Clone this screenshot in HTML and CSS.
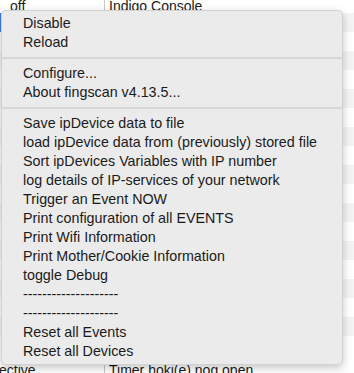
FILE: index.html
```html
<!DOCTYPE html>
<html lang="en">
<head>
    <meta charset="utf-8">
    <title>Plugin menu</title>
    <link rel="stylesheet" href="styles.css">
</head>
<body>
<div class="table">
    <div class="row top"><div class="cell first">off</div><div class="cell">Indigo Console</div></div>
    <div class="row selected alt"><div class="cell first"></div><div class="cell"></div></div>
    <div class="row"><div class="cell first"></div><div class="cell"></div></div>
    <div class="row alt"><div class="cell first"></div><div class="cell"></div></div>
    <div class="row"><div class="cell first"></div><div class="cell"></div></div>
    <div class="row alt"><div class="cell first"></div><div class="cell"></div></div>
    <div class="row"><div class="cell first"></div><div class="cell"></div></div>
    <div class="row alt"><div class="cell first"></div><div class="cell"></div></div>
    <div class="row"><div class="cell first"></div><div class="cell"></div></div>
    <div class="row alt"><div class="cell first"></div><div class="cell"></div></div>
    <div class="row"><div class="cell first"></div><div class="cell"></div></div>
    <div class="row alt"><div class="cell first"></div><div class="cell"></div></div>
    <div class="row"><div class="cell first"></div><div class="cell"></div></div>
    <div class="row alt"><div class="cell first"></div><div class="cell"></div></div>
    <div class="row"><div class="cell first"></div><div class="cell"></div></div>
    <div class="row alt"><div class="cell first"></div><div class="cell"></div></div>
    <div class="row"><div class="cell first"></div><div class="cell"></div></div>
    <div class="row alt"><div class="cell first"></div><div class="cell"></div></div>
    <div class="row"><div class="cell first"></div><div class="cell"></div></div>
    <div class="row last"><div class="cell first">ective</div><div class="cell">Timer hoki(e) nog open</div></div>
</div>

<div class="menu">
    <div class="item">Disable</div>
    <div class="item">Reload</div>
    <div class="sep"></div>
    <div class="item">Configure...</div>
    <div class="item">About fingscan v4.13.5...</div>
    <div class="sep"></div>
    <div class="item">Save ipDevice data to file</div>
    <div class="item">load ipDevice data from (previously) stored file</div>
    <div class="item">Sort ipDevices Variables with IP number</div>
    <div class="item">log details of IP-services of your network</div>
    <div class="item">Trigger an Event NOW</div>
    <div class="item">Print configuration of all EVENTS</div>
    <div class="item">Print Wifi Information</div>
    <div class="item">Print Mother/Cookie Information</div>
    <div class="item">toggle Debug</div>
    <div class="item">--------------------</div>
    <div class="item">--------------------</div>
    <div class="item">Reset all Events</div>
    <div class="item">Reset all Devices</div>
</div>
</body>
</html>
```

FILE: styles.css
```css
html, body {
    height: 100%;
    overflow: hidden;
}

body {
    margin: 0;
    position: relative;
    background: #ffffff;
    font-family: "Liberation Sans", Arial, sans-serif;
    color: #1a1a1a;
}

.table {
    display: flex;
    flex-direction: column;
    margin-top: -6px;
}

.row {
    display: flex;
    height: 19px;
    font-size: 14px;
    line-height: 19px;
}

.row.alt {
    background: #f4f4f4;
}

.row.top .cell {
    padding-top: 3px;
}

.row.last {
    height: 26px;
}

.row.last .cell {
    padding-top: 6px;
}

.cell {
    padding-left: 4px;
    white-space: nowrap;
    overflow: hidden;
}

.cell.first {
    width: 94px;
    padding-left: 10px;
    border-right: 1px solid #c8c8c8;
    flex-shrink: 0;
}

.row.last .cell.first {
    width: 104px;
    padding-left: 0;
    text-indent: -1px;
}

.row.selected {
    box-shadow: inset 2px 0 0 #3b82e6;
}

.menu {
    position: absolute;
    top: 10px;
    left: 1px;
    width: 342px;
    height: 355px;
    box-sizing: border-box;
    padding: 3px 0 5px 0;
    background: #ebebeb;
    border: 1px solid #d2d2d2;
    border-radius: 5px;
    box-shadow: 0 3px 9px rgba(0, 0, 0, 0.22);
    font-size: 14.3px;
}

.item {
    height: 19px;
    line-height: 19px;
    padding-left: 21px;
    white-space: nowrap;
}

.sep {
    height: 12px;
    display: flex;
    align-items: center;
}

.sep::after {
    content: "";
    display: block;
    width: 100%;
    height: 2px;
    background: #d6d6d6;
}
```
